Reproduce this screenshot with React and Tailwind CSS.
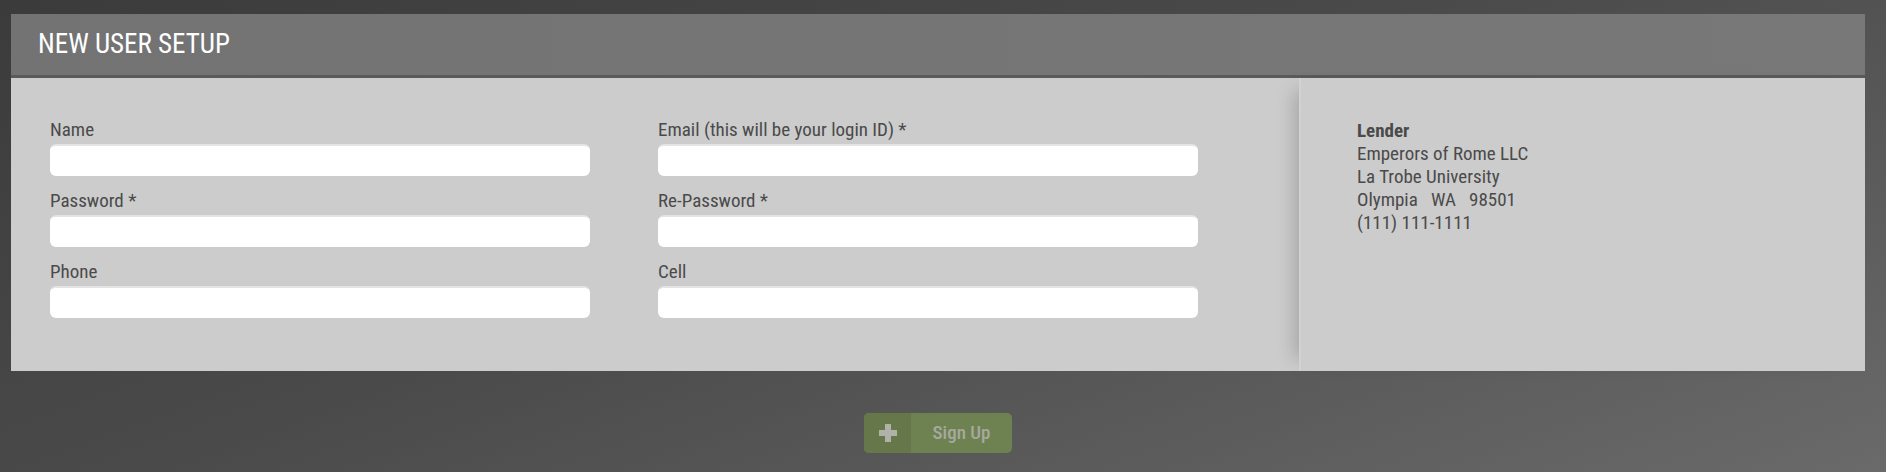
import React from 'react';

const font = { fontFamily: '"Roboto Condensed", "Liberation Sans Narrow", Roboto, sans-serif' };

const Field = ({ label }) => (
    <div className="flex flex-col">
        <label className="h-[22px] text-[19px] leading-[22px] text-[#4a4a4a]">{label}</label>
        <input
            type="text"
            className="mt-[3px] h-[32px] w-full rounded-[6px] border-t-2 border-[#e4e4e4] bg-white px-3 text-[16px] outline-none"
        />
    </div>
);

const App = () => {
    return (
        <div
            className="min-h-screen w-full bg-[linear-gradient(160deg,#3b3b3b_0%,#4a4a4a_45%,#6a6a6a_100%)] pt-[14px]"
            style={font}
        >
            <div className="ml-[11px] w-[1854px]">
                {/* HEADER */}
                <div className="flex h-[64px] items-center border-b-[3px] border-[#5a5a5a] bg-[linear-gradient(90deg,#737373,#787878)] pl-[27px]">
                    <h1 className="text-[27px] font-normal uppercase text-white">New User Setup</h1>
                </div>

                {/* BODY */}
                <div className="flex h-[293px] bg-[#cccccc]">
                    <div className="grid w-[1288px] grid-cols-[540px_540px] content-start gap-x-[68px] gap-y-[14px] pl-[39px] pt-[41px]">
                        <Field label="Name" />
                        <Field label="Email (this will be your login ID) *" />
                        <Field label="Password *" />
                        <Field label="Re-Password *" />
                        <Field label="Phone" />
                        <Field label="Cell" />
                    </div>
                    <div className="flex-1 border-l-2 border-[#d2d2d2] pl-[56px] pt-[41px] text-[19px] leading-[23px] text-[#4a4a4a] shadow-[-16px_0_18px_-12px_rgba(0,0,0,0.2)]">
                        <div className="font-bold">Lender</div>
                        <div>Emperors of Rome LLC</div>
                        <div>La Trobe University</div>
                        <div className="whitespace-pre">Olympia   WA   98501</div>
                        <div>(111) 111-1111</div>
                    </div>
                </div>

                {/* SIGN UP */}
                <div className="mt-[42px] flex justify-center">
                    <button className="flex h-[40px] w-[148px] items-center overflow-hidden rounded-[5px] bg-[#6e8150]">
                        <span className="flex h-full w-[47px] items-center justify-center bg-[#66784a]">
                            <svg width="20" height="20" viewBox="0 0 20 20">
                                <path d="M10 1v18M1 10h18" stroke="#b0b2aa" strokeWidth="6" />
                            </svg>
                        </span>
                        <span className="flex-1 text-center text-[19px] font-medium text-[#a6a99e]">Sign Up</span>
                    </button>
                </div>
            </div>
        </div>
    );
};

export default App;
